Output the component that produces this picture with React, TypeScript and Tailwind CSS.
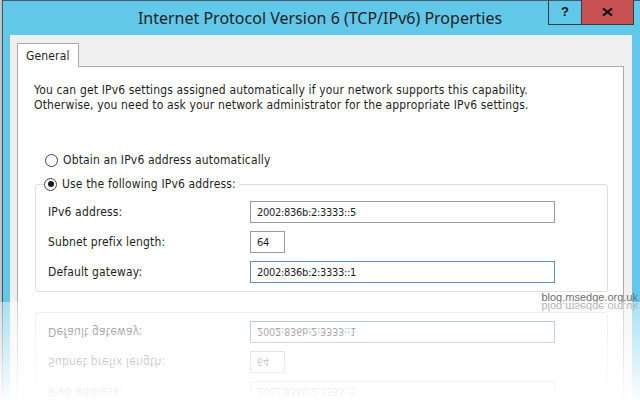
import React from 'react';

const uiFont = "font-['DejaVu_Sans_Condensed','Liberation_Sans',sans-serif]";

const RadioDot: React.FC<{ checked?: boolean }> = ({ checked }) => (
  <span className="flex h-[13px] w-[13px] shrink-0 items-center justify-center rounded-full border border-[#444] bg-white">
    {checked && <span className="h-[6px] w-[6px] rounded-full bg-[#1a1a1a]" />}
  </span>
);

const Field: React.FC<{ value: string; width: string; focused?: boolean }> = ({ value, width, focused }) => (
  <input
    readOnly
    value={value}
    className={`h-[22px] ${width} border bg-white pl-[6px] text-[11px] tracking-[-0.3px] text-[#1e1e1e] outline-none ${uiFont} ${
      focused ? 'border-[#5f8db3]' : 'border-[#9c9c9c]'
    }`}
  />
);

const DialogWindow: React.FC = () => (
  <div className="relative flex h-[302px] w-[640px] overflow-hidden bg-white">
    <div className="w-[3px] shrink-0 border-r border-[#4a4f55] bg-[#b9c4cc]" />

    <div className="flex flex-1 flex-col border-t border-[#4b5b62] bg-[#62c8ea]">
      {/* title bar */}
      <div className="relative h-[34px] shrink-0">
        <div className="-ml-[3px] pt-[6px] text-center font-['Noto_Sans',sans-serif] text-[16px] leading-[22px] text-[#1e1e1e]">
          Internet Protocol Version 6 (TCP/IPv6) Properties
        </div>
        <div className="absolute right-[6px] top-[-1px] flex h-[25px]">
          <div className="flex w-[33px] items-center justify-center border-b border-l border-[#3a3a3a] font-['Liberation_Sans',sans-serif] text-[13px] font-bold text-[#111]">
            ?
          </div>
          <div className="flex w-[53px] items-center justify-center border-b border-l border-r border-[#3a3a3a] bg-[#c75050]">
            <svg width="11" height="8" viewBox="0 0 11 8">
              <path d="M1 0.5 L10 7.5 M10 0.5 L1 7.5" stroke="#111" strokeWidth="2.2" fill="none" />
            </svg>
          </div>
        </div>
      </div>

      {/* dialog body */}
      <div className={`ml-[7px] mr-[8px] bg-[#f0f0f0] pl-[7px] pr-[8px] pt-[8px] ${uiFont} text-[12px] tracking-[0.15px] text-[#1e1e1e]`}>
        <div className="relative z-10 -mb-px flex h-[24px] w-[62px] items-center border-l border-r border-t border-[#acacac] bg-white pl-[8px]">
          General
        </div>
        <div className="h-[280px] border border-[#acacac] bg-white pt-[16px]">
          <p className="ml-[16px] leading-[15px]">
            You can get IPv6 settings assigned automatically if your network supports this capability.
            <br />
            Otherwise, you need to ask your network administrator for the appropriate IPv6 settings.
          </p>

          <div className="ml-[27px] mt-[39px] flex h-[16px] items-center gap-[5px]">
            <RadioDot />
            <span>Obtain an IPv6 address automatically</span>
          </div>

          <fieldset className="ml-[17px] mr-[15px] mt-[8px] rounded-[3px] border border-[#dcdfe3]">
            <legend className="ml-[8px] pr-[3px]">
              <span className="flex h-[16px] items-center gap-[5px]">
                <RadioDot checked />
                <span>Use the following IPv6 address:</span>
              </span>
            </legend>
            <div className="grid grid-cols-[202px_1fr] items-center gap-y-[8px] pb-[8px] pl-[12px] pt-[9px]">
              <span>IPv6 address:</span>
              <Field value="2002:836b:2:3333::5" width="w-[305px]" />
              <span>Subnet prefix length:</span>
              <Field value="64" width="w-[35px]" />
              <span>Default gateway:</span>
              <Field value="2002:836b:2:3333::1" width="w-[305px]" focused />
            </div>
          </fieldset>
        </div>
      </div>
    </div>

    <span className="absolute bottom-[-3px] right-[2px] font-['Liberation_Sans',sans-serif] text-[11px] text-[#6e6e6e]">
      blog.msedge.org.uk
    </span>
  </div>
);

export default function App() {
  return (
    <div className="h-[404px] w-[640px] overflow-hidden bg-white">
      <DialogWindow />
      <div className="relative h-[102px] overflow-hidden" aria-hidden="true">
        <div className="-scale-y-100">
          <DialogWindow />
        </div>
        <div className="absolute inset-0 bg-linear-to-b from-white/45 to-white" />
      </div>
    </div>
  );
}
